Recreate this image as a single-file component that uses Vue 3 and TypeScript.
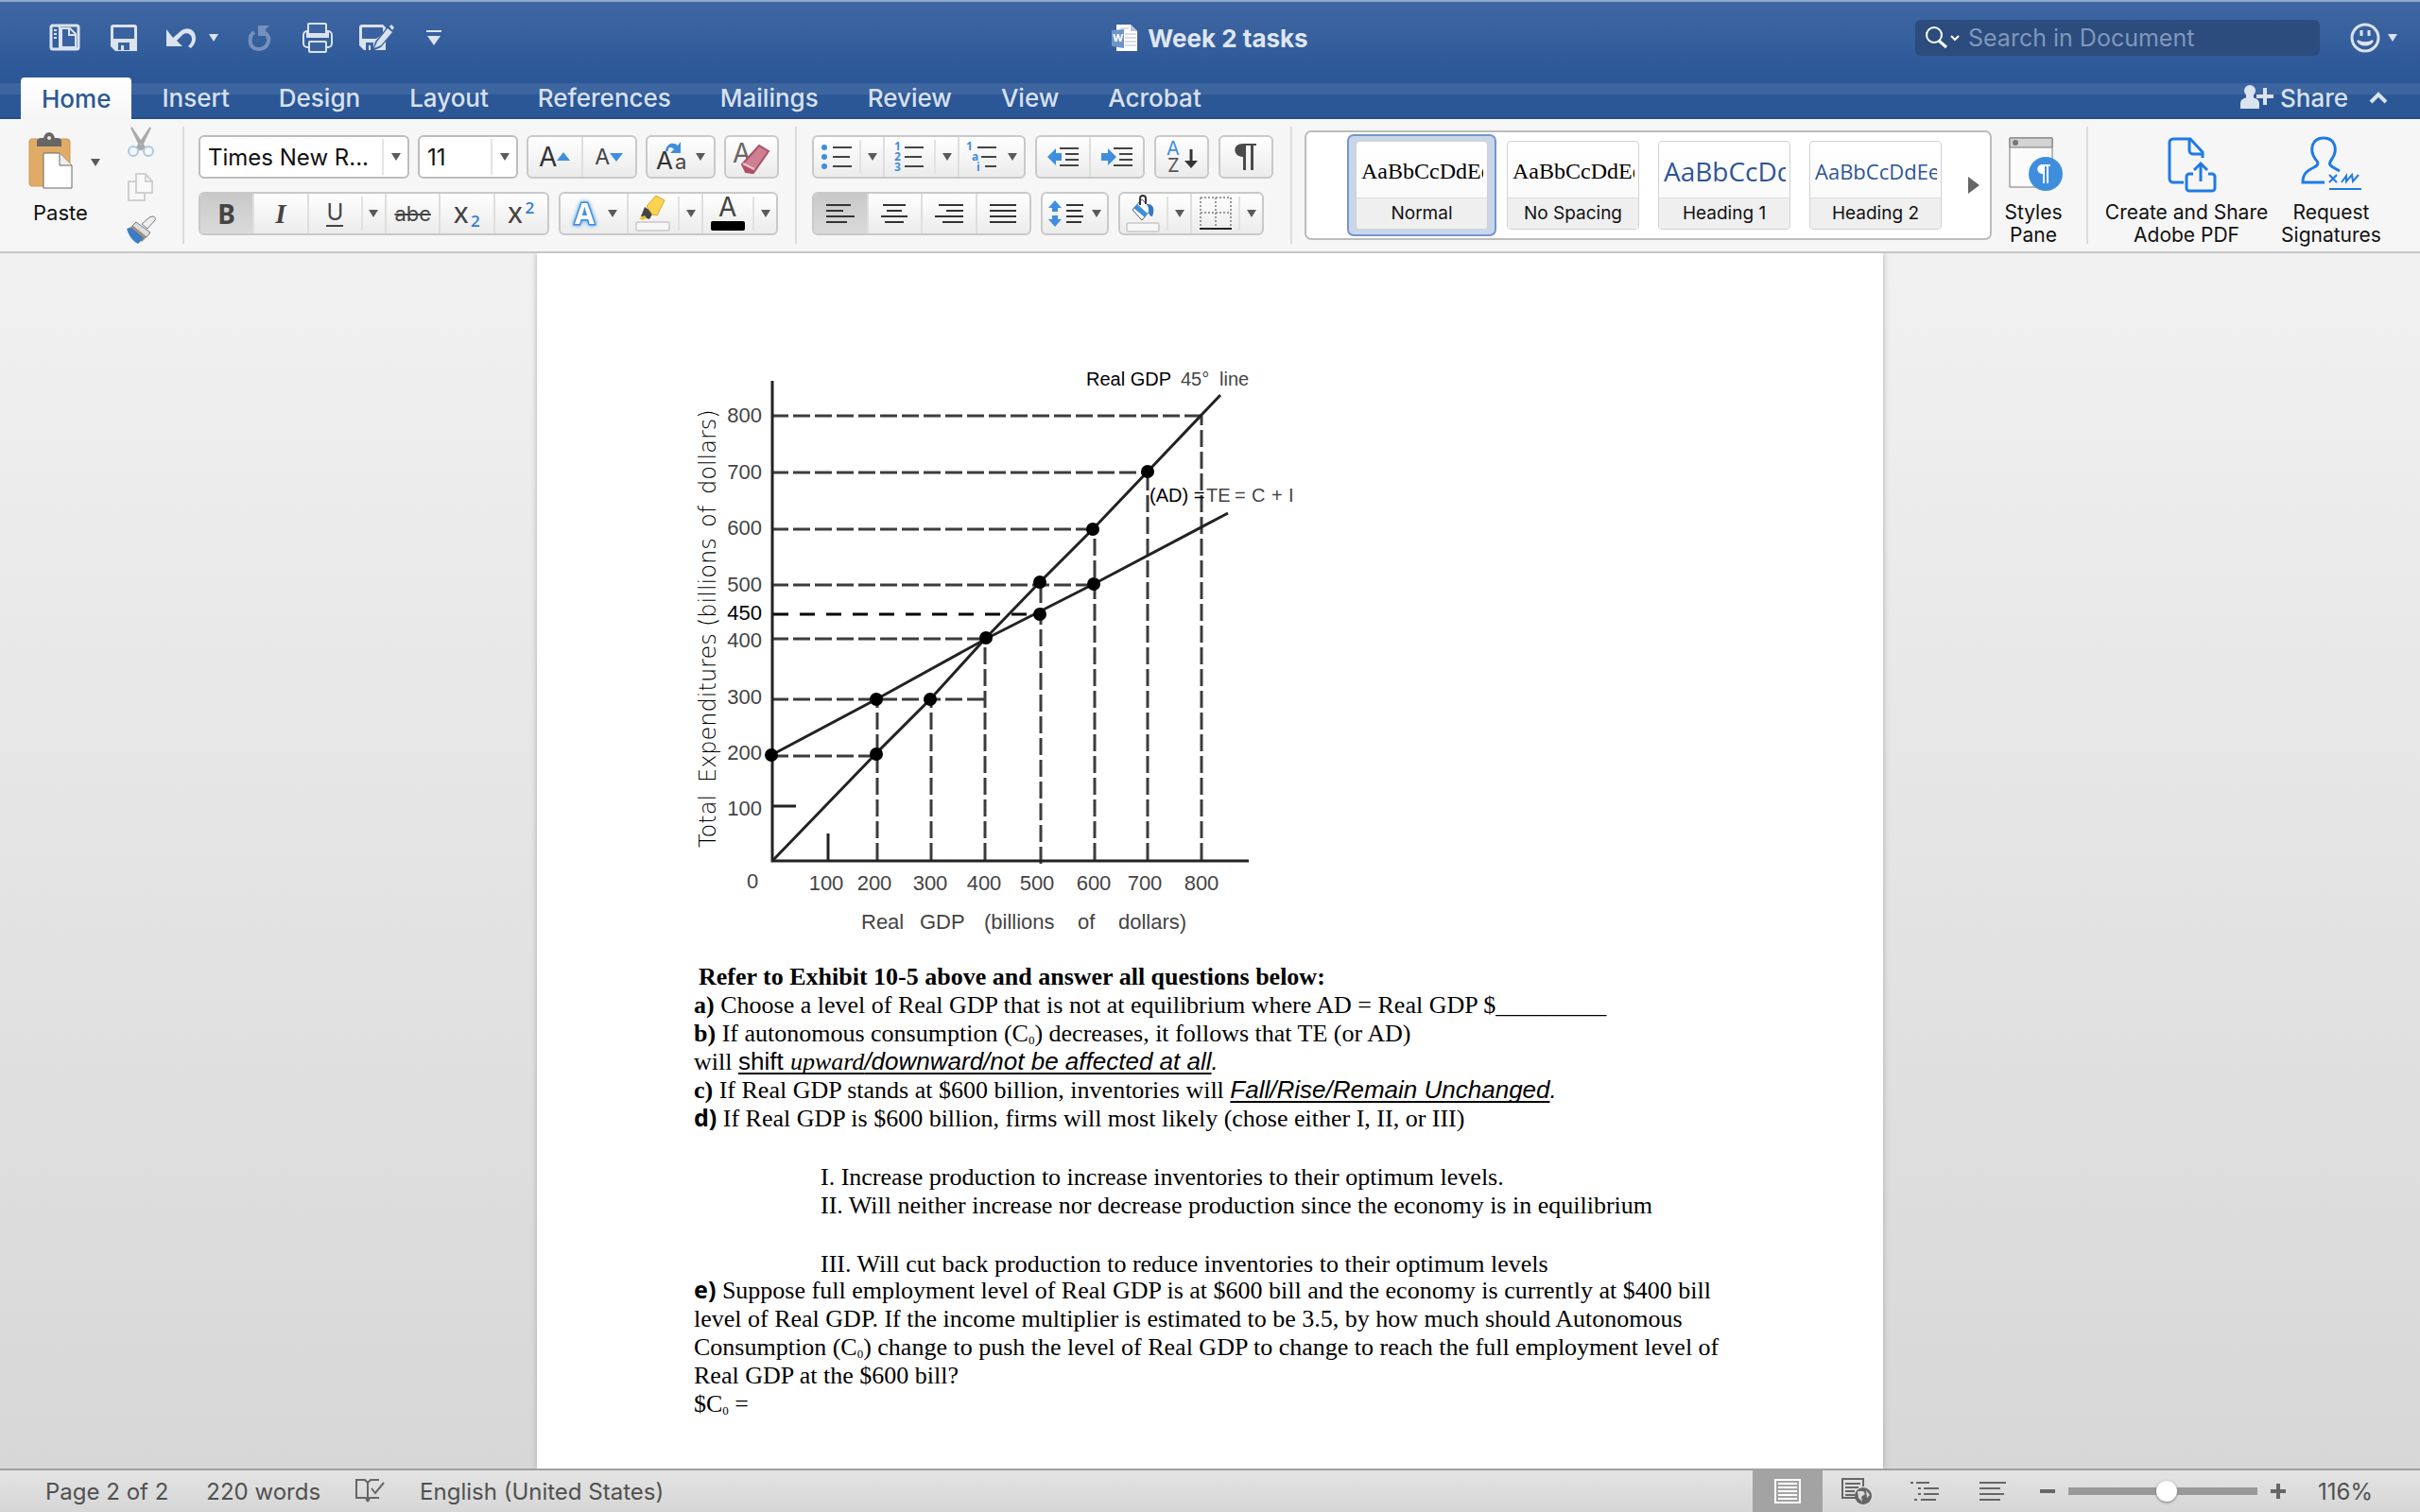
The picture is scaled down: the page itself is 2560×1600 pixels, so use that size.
<script setup lang="ts">
import { ref } from 'vue'

interface StyleCard { label: string; sample: string; kind: string }
interface Mark { x: number; y: number; text: string; strong?: boolean }
interface Segment { x1: number; y1: number; x2: number; y2: number }

const tabs: string[] = ['Home', 'Insert', 'Design', 'Layout', 'References', 'Mailings', 'Review', 'View', 'Acrobat']
const activeTab = ref('Home')
const activeStyle = ref('Normal')
const zoom = ref(52)

const cards: StyleCard[] = [
  { label: 'Normal', sample: 'AaBbCcDdEe', kind: 'serif' },
  { label: 'No Spacing', sample: 'AaBbCcDdEe', kind: 'serif' },
  { label: 'Heading 1', sample: 'AaBbCcDd', kind: 'h1' },
  { label: 'Heading 2', sample: 'AaBbCcDdEe', kind: 'h2' },
]

const yLabels: Mark[] = [
  { x: 806, y: 447, text: '800' },
  { x: 806, y: 507, text: '700' },
  { x: 806, y: 566, text: '600' },
  { x: 806, y: 626, text: '500' },
  { x: 806, y: 656, text: '450', strong: true },
  { x: 806, y: 685, text: '400' },
  { x: 806, y: 745, text: '300' },
  { x: 806, y: 804, text: '200' },
  { x: 806, y: 863, text: '100' },
]
const xLabels: Mark[] = [
  { x: 796, y: 940, text: '0' },
  { x: 874, y: 942, text: '100' },
  { x: 925, y: 942, text: '200' },
  { x: 984, y: 942, text: '300' },
  { x: 1041, y: 942, text: '400' },
  { x: 1097, y: 942, text: '500' },
  { x: 1157, y: 942, text: '600' },
  { x: 1211, y: 942, text: '700' },
  { x: 1271, y: 942, text: '800' },
]
const axisWords: Mark[] = [
  { x: 911, y: 983, text: 'Real' },
  { x: 973, y: 983, text: 'GDP' },
  { x: 1041, y: 983, text: '(billions' },
  { x: 1140, y: 983, text: 'of' },
  { x: 1183, y: 983, text: 'dollars)' },
]
const sideWords: Mark[] = [
  { x: -897, y: 757, text: 'Total' },
  { x: -828, y: 757, text: 'Expenditures' },
  { x: -663, y: 757, text: '(billions' },
  { x: -558, y: 757, text: 'of' },
  { x: -523, y: 757, text: 'dollars)' },
]
const lineWords: Mark[] = [
  { x: 1149, y: 408, text: 'Real GDP', strong: true },
  { x: 1249, y: 408, text: '45°' },
  { x: 1290, y: 408, text: 'line' },
  { x: 1216, y: 531, text: '(AD) =', strong: true },
  { x: 1276, y: 531, text: 'TE' },
  { x: 1306, y: 531, text: '=' },
  { x: 1324, y: 531, text: 'C' },
  { x: 1345, y: 531, text: '+' },
  { x: 1363, y: 531, text: 'I' },
]
const guides: Segment[] = [
  { x1: 816, y1: 440, x2: 1271, y2: 440 },
  { x1: 816, y1: 500, x2: 1214, y2: 500 },
  { x1: 816, y1: 560, x2: 1157, y2: 560 },
  { x1: 816, y1: 619, x2: 1157, y2: 619 },
  { x1: 816, y1: 676, x2: 1042, y2: 676 },
  { x1: 816, y1: 740, x2: 1042, y2: 740 },
  { x1: 816, y1: 800, x2: 927, y2: 800 },
  { x1: 928, y1: 910, x2: 928, y2: 740 },
  { x1: 985, y1: 910, x2: 985, y2: 740 },
  { x1: 1042, y1: 910, x2: 1042, y2: 676 },
  { x1: 1101, y1: 914, x2: 1101, y2: 617 },
  { x1: 1158, y1: 910, x2: 1158, y2: 560 },
  { x1: 1214, y1: 910, x2: 1214, y2: 500 },
  { x1: 1271, y1: 910, x2: 1271, y2: 440 },
]
const points: [number, number][] = [
  [816, 799], [927, 740], [984, 740], [927, 798], [1043, 675], [1100, 616],
  [1100, 650], [1156, 560], [1157, 618], [1214, 499],
]
</script>

<template>
  <div class="app">
    <header class="titlebar">
      <div class="quick">
        <button aria-label="Sidebar"><svg width="34" height="30" viewBox="0 0 34 30"><rect x="2" y="2" width="29" height="25" rx="2" fill="none" stroke="#dbe3ef" stroke-width="3" /><path d="M5 7h3M5 11h3M5 15h3" stroke="#dbe3ef" stroke-width="2" /><path d="M11 2v26M13 5h9l6 6v14H13z" stroke="#dbe3ef" stroke-width="2" fill="#3a629f" /><path d="M21 5v7h7" stroke="#dbe3ef" stroke-width="2" fill="none" /></svg></button>
        <button class="q-save" aria-label="Save"><svg width="30" height="30" viewBox="0 0 30 30"><path d="M1 4a3 3 0 0 1 3-3h22a3 3 0 0 1 3 3v25H6l-5-5z" fill="#dbe3ef" /><rect x="4" y="4" width="22" height="12" fill="#3a629f" /><path d="M9 28v-8h12v8h-6v-5h-3v5z" fill="#3a629f" /></svg></button>
        <button class="q-undo" aria-label="Undo"><svg width="34" height="24" viewBox="0 0 34 24"><path d="M2 3v18h17l-6-6 6-6c4-4 10-1 10 4 0 3-1 5-4 8l3 2c4-4 5-7 5-11C33 3 24-1 17 5l-8 7z" fill="#dbe3ef" /></svg></button>
        <button class="q-drop" aria-label="Undo history"><i class="caret light"></i></button>
        <button class="q-redo" aria-label="Redo"><svg width="26" height="28" viewBox="0 0 26 28"><path d="M8 8c-6 4-7 17 4 18 11 0 14-11 8-17" fill="none" stroke="#7690bc" stroke-width="4" /><path d="M12 1h12l-4 4 1 7-9 0z" fill="#7690bc" /></svg></button>
        <button class="q-print" aria-label="Print"><svg width="34" height="34" viewBox="0 0 34 34"><g fill="none" stroke="#dbe3ef" stroke-width="2"><rect x="7" y="2" width="19" height="10" rx="1" /><rect x="2" y="10" width="30" height="17" rx="4" /></g><path d="M5 10h24v7H5z" fill="#dbe3ef" /><rect x="8" y="3" width="17" height="9" fill="#3c64a1" /><rect x="8" y="21" width="18" height="11" rx="1" fill="#3a629f" stroke="#dbe3ef" stroke-width="2" /></svg></button>
        <button class="q-edit" aria-label="Save as"><svg width="38" height="32" viewBox="0 0 38 32"><path d="M1 5a3 3 0 0 1 3-3h22l3 3v24H6l-5-5z" fill="#dbe3ef" /><path d="M4 5h22v7l-7 5H4zM8 29v-8h8v8h-3v-5h-2v5z" fill="#3a629f" /><path d="M15 30l3-10L31 4l7 5-14 17z" fill="#3a629f" /><path d="M17 27l3-7L31 6l5 4-12 14zM33 4l2-2 3 3-2 3z" fill="#dbe3ef" /></svg></button>
        <button class="q-more" aria-label="Customize toolbar"><svg width="16" height="16" viewBox="0 0 16 16"><path d="M0 0h16v2H0zM1 6h14l-7 10z" fill="#dbe3ef" /></svg></button>
      </div>
      <h1 class="doc-title">
        <svg width="28" height="30" viewBox="0 0 28 30"><path d="M5 1h15l7 7v21H5z" fill="#fff" /><path d="M20 1v7h7z" fill="#b9c2d0" /><path d="M9 5h9M14 11h12M14 15h12M14 19h12M14 23h12" stroke="#b4bcc9" stroke-width="1" /><path d="M0 7l13-1v20l-13-2z" fill="#6f93c8" /><text x="1" y="19" class="w-mark">W</text></svg>
        <span>Week 2 tasks</span>
      </h1>
      <div class="tools">
        <label class="search">
          <svg width="38" height="24" viewBox="0 0 38 24"><circle cx="9" cy="9" r="8" fill="none" stroke="#fff" stroke-width="2" /><path d="M14 15l8 7" stroke="#fff" stroke-width="3" /><path d="M27 10l4 4 4-4" fill="none" stroke="#fff" stroke-width="2" /></svg>
          <input type="text" placeholder="Search in Document" aria-label="Search in Document" />
        </label>
        <button class="smile" aria-label="Feedback"><svg width="34" height="34" viewBox="0 0 34 34"><circle cx="17" cy="17" r="14" fill="none" stroke="#dbe3ef" stroke-width="3" /><path d="M13 9v6M21 9v6" stroke="#dbe3ef" stroke-width="3" /><path d="M9 20c3 6 13 6 16 0-4 3-12 3-16 0z" fill="#dbe3ef" stroke="#dbe3ef" stroke-width="2" /></svg><i class="caret light"></i></button>
      </div>
    </header>

    <nav class="tabs">
      <button v-for="t in tabs" :key="t" :class="['tab', { on: t === activeTab }]" @click="activeTab = t">{{ t }}</button>
      <button class="share">
        <svg width="36" height="26" viewBox="0 0 36 26"><circle cx="10" cy="6" r="6" fill="#dbe3ef" /><path d="M6 8h8v6H6zM0 25v-5c0-5 4-7 10-7s10 2 10 7v5zM24 3h4v7h7v4h-7v7h-4v-7h-7v-4h7z" fill="#dbe3ef" /></svg>
        <span>Share</span>
      </button>
      <button class="fold" aria-label="Collapse ribbon"><svg width="20" height="13" viewBox="0 0 20 13"><path d="M2 11l8-8 8 8" fill="none" stroke="#dbe3ef" stroke-width="4" /></svg></button>
    </nav>

    <section class="ribbon">
      <div class="clipboard">
        <button class="paste">
          <svg width="48" height="60" viewBox="0 0 48 60"><rect x="1" y="7" width="43" height="50" rx="3" fill="#dfab67" stroke="#cf9a52" stroke-width="1" /><path d="M9 10c0-4 4-4 7-4 1-4 3-6 6-6s5 2 6 6c4 0 7 0 7 4v5H9z" fill="#666" /><circle cx="22" cy="6" r="2" fill="#f0e6d8" /><path d="M16 22h17l13 13v24H16z" fill="#fff" stroke="#666" stroke-width="1" /><path d="M33 22v13h13" fill="#eee" stroke="#666" stroke-width="1" /></svg>
          <span>Paste</span>
        </button>
        <button class="paste-drop" aria-label="Paste options"><i class="caret"></i></button>
        <div class="clip-tools">
          <button aria-label="Cut"><svg width="30" height="34" viewBox="0 0 30 34"><path d="M5 1l14 21-3 2zM25 1L11 22l3 2z" fill="#a9a9a9" stroke="#a9a9a9" stroke-width="2" /><circle cx="7" cy="26" r="5" fill="none" stroke="#a9c8e6" stroke-width="2" /><circle cx="23" cy="26" r="5" fill="none" stroke="#a9c8e6" stroke-width="2" /></svg></button>
          <button aria-label="Copy"><svg width="30" height="32" viewBox="0 0 30 32"><path d="M2 10h17v20H2z" fill="#f7f7f7" stroke="#d0d0d0" stroke-width="2" /><path d="M10 2h10l7 8v12H10zM20 2v8h7" fill="#f9f9f9" stroke="#d0d0d0" stroke-width="2" /></svg></button>
          <button aria-label="Format painter"><svg width="34" height="30" viewBox="0 0 34 30"><path d="M29 1c3 0 4 2 3 4l-8 9-6-5 8-7z" fill="#eee" stroke="#777" stroke-width="1" /><path d="M12 7l15 11-4 5L8 11z" fill="#ddd" stroke="#777" stroke-width="1" /><path d="M8 11l15 12-5 5L3 14z" fill="#a68f76" /><path d="M2 14l5-1 13 11-6 6C8 27 4 21 2 14z" fill="#3a7cc9" /></svg></button>
        </div>
      </div>
      <div class="sep"></div>

      <div class="rows font-rows">
        <div class="row">
          <div class="combo family"><select aria-label="Font"><option>Times New R...</option></select><i class="caret"></i></div>
          <div class="combo size"><select aria-label="Font size"><option>11</option></select><i class="caret"></i></div>
          <div class="group grow-shrink">
            <button aria-label="Increase font size"><span class="big-a">A</span><svg width="14" height="10" viewBox="0 0 14 10"><path d="M0 9l7-9 7 9z" fill="#3f8ede" /></svg></button>
            <button aria-label="Decrease font size"><span class="small-a">A</span><svg width="14" height="10" viewBox="0 0 14 10"><path d="M0 1l7 9 7-9z" fill="#3f8ede" /></svg></button>
          </div>
          <div class="group case"><button aria-label="Change case"><svg width="34" height="38" viewBox="0 0 34 38"><text x="0" y="32" class="ic-a">A</text><text x="20" y="32" class="ic-a2">a</text><path d="M10 13c1-9 9-10 13-6l3-4v12H15l4-4c-4-4-7-1-6 2z" fill="#3f8ede" /></svg><i class="caret"></i></button></div>
          <div class="group single"><button aria-label="Clear formatting"><svg width="40" height="42" viewBox="0 0 40 42"><text x="0" y="27" class="ic-clear">A</text><path d="M10 29L28 9l10 6-16 23-8-1z" fill="#cf7f92" stroke="#ab5068" stroke-width="2" /><path d="M10 29l12 6v4l-8-2z" fill="#b04f67" /><path d="M11 28l12 6" stroke="#f0c3cc" stroke-width="2" /></svg></button></div>
        </div>
        <div class="row">
          <div class="group bius">
            <button class="pressed" aria-label="Bold"><b class="bold">B</b></button>
            <button aria-label="Italic"><em class="ital">I</em></button>
            <button aria-label="Underline"><span class="under">U</span></button>
            <button class="drop" aria-label="Underline style"><i class="caret"></i></button>
            <button aria-label="Strikethrough"><s class="strike">abc</s></button>
            <button aria-label="Subscript"><span class="x">X</span><sub class="idx low">2</sub></button>
            <button aria-label="Superscript"><span class="x">X</span><sup class="idx high">2</sup></button>
          </div>
          <div class="group paint">
            <button class="effects" aria-label="Text effects"><svg width="32" height="34" viewBox="0 0 32 34"><text x="5" y="28" class="glow">A</text></svg><i class="caret"></i></button>
            <button aria-label="Highlight"><svg width="38" height="40" viewBox="0 0 38 40"><path d="M6 23l4-10 9 6-4 7z" fill="#444" /><path d="M4 25l6-3 2 3-4 2z" fill="#f4c430" /><path d="M12 12L22 1l9 5-8 16-5-1z" fill="#fbd34f" stroke="#d9a62b" stroke-width="1" /><rect x="1" y="29" width="35" height="9" rx="2" fill="#f7f7f7" stroke="#d2d2d2" stroke-width="2" /></svg></button>
            <button class="drop" aria-label="Highlight color"><i class="caret"></i></button>
            <button aria-label="Font color"><svg width="38" height="40" viewBox="0 0 38 40"><text x="9" y="23" class="ic-color">A</text><rect x="1" y="28" width="36" height="10" rx="2" fill="#000" /></svg></button>
            <button class="drop" aria-label="Font color menu"><i class="caret"></i></button>
          </div>
        </div>
      </div>
      <div class="sep"></div>

      <div class="rows para-rows">
        <div class="row">
          <div class="group lists">
            <button aria-label="Bullets"><svg width="34" height="30" viewBox="0 0 34 30"><g fill="#3f8ede"><circle cx="4" cy="5" r="3" /><circle cx="4" cy="15" r="3" /><circle cx="4" cy="25" r="3" /></g><path d="M13 5h20M13 15h18M13 25h20" stroke="#444" stroke-width="2" /></svg></button>
            <button class="drop" aria-label="Bullet menu"><i class="caret"></i></button>
            <button aria-label="Numbering"><svg width="34" height="32" viewBox="0 0 34 32"><g class="tiny"><text x="1" y="9">1</text><text x="1" y="20">2</text><text x="1" y="31">3</text></g><path d="M12 6h20M12 16h18M12 26h20" stroke="#444" stroke-width="2" /></svg></button>
            <button class="drop" aria-label="Numbering menu"><i class="caret"></i></button>
            <button aria-label="Multilevel list"><svg width="34" height="32" viewBox="0 0 34 32"><g class="tiny"><text x="0" y="9">1</text><text x="6" y="20">a</text><text x="11" y="31">i</text></g><path d="M12 6h20M16 16h16M20 26h12" stroke="#444" stroke-width="2" /></svg><i class="caret"></i></button>
          </div>
          <div class="group indent">
            <button aria-label="Decrease indent"><svg width="36" height="26" viewBox="0 0 36 26"><path d="M1 13l9-9v5h6v8h-6v5z" fill="#3f8ede" /><path d="M14 4h20M20 10h14M20 16h14M14 22h20" stroke="#444" stroke-width="2" /></svg></button>
            <button aria-label="Increase indent"><svg width="36" height="26" viewBox="0 0 36 26"><path d="M17 13l-9-9v5H1v8h7v5z" fill="#3f8ede" /><path d="M14 4h20M20 10h14M20 16h14M14 22h20" stroke="#444" stroke-width="2" /></svg></button>
          </div>
          <div class="group single"><button aria-label="Sort"><svg width="34" height="38" viewBox="0 0 34 38"><text x="1" y="17" class="sort-a">A</text><text x="2" y="35" class="sort-z">Z</text><path d="M27 11v16" stroke="#333" stroke-width="3" /><path d="M20 23h14l-7 8z" fill="#333" /></svg></button></div>
          <div class="group single"><button aria-label="Show marks"><svg width="26" height="32" viewBox="0 0 26 32"><path d="M24 2H10C-2 2-1 16 10 16v14h3V4h5v26h3V4h3z" fill="#4a4a4a" /></svg></button></div>
        </div>
        <div class="row">
          <div class="group align">
            <button class="pressed" aria-label="Align left"><svg width="32" height="24" viewBox="0 0 32 24"><path d="M1 3h26M1 9h18M1 15h30M1 21h22" stroke="#333" stroke-width="2" /></svg></button>
            <button aria-label="Center"><svg width="32" height="24" viewBox="0 0 32 24"><path d="M4 3h24M8 9h16M2 15h28M6 21h20" stroke="#333" stroke-width="2" /></svg></button>
            <button aria-label="Align right"><svg width="32" height="24" viewBox="0 0 32 24"><path d="M5 3h26M13 9h18M1 15h30M9 21h22" stroke="#333" stroke-width="2" /></svg></button>
            <button aria-label="Justify"><svg width="32" height="24" viewBox="0 0 32 24"><path d="M2 3h28M2 9h28M2 15h28M2 21h28" stroke="#333" stroke-width="2" /></svg></button>
          </div>
          <div class="group case"><button aria-label="Line spacing"><svg width="38" height="46" viewBox="0 0 38 46"><path d="M7 9l7 8h-4v4H4v-4H0zM7 37l7-8h-4v-4H4v4H0z" fill="#3f8ede" /><path d="M19 14h18M19 20h16M19 26h18M19 32h16" stroke="#333" stroke-width="2" /></svg><i class="caret"></i></button></div>
          <div class="group fill">
            <button aria-label="Shading"><svg width="38" height="42" viewBox="0 0 38 42"><path d="M7 17L17 6l10 10-10 12z" fill="#fff" stroke="#555" stroke-width="1" /><path d="M12 11l11 10-3 4-12-10z" fill="#3f8ede" /><path d="M22 11c7-1 9 5 6 13-4 0-4-5-4-9z" fill="#3277c4" /><path d="M15 12V5c0-4 6-4 6 0v6" fill="none" stroke="#333" stroke-width="2" /><rect x="1" y="31" width="34" height="9" rx="2" fill="#f7f7f7" stroke="#d2d2d2" stroke-width="2" /></svg></button>
            <button class="drop" aria-label="Shading color"><i class="caret"></i></button>
            <button aria-label="Borders"><svg width="36" height="36" viewBox="0 0 36 36"><path d="M2 1h32M2 17h32M2 1v32M18 1v32M34 1v32" fill="none" stroke="#999" stroke-width="2" stroke-dasharray="2 2" /><path d="M1 34h34" stroke="#222" stroke-width="2" /></svg></button>
            <button class="drop" aria-label="Border menu"><i class="caret"></i></button>
          </div>
        </div>
      </div>
      <div class="sep"></div>

      <div class="gallery">
        <button v-for="c in cards" :key="c.label" :class="['card', { chosen: c.label === activeStyle }]" @click="activeStyle = c.label">
          <span class="card-face">
            <span :class="['sample', c.kind]">{{ c.sample }}</span>
            <span class="card-label">{{ c.label }}</span>
          </span>
        </button>
        <button class="more" aria-label="More styles"><svg width="12" height="18" viewBox="0 0 12 18"><path d="M0 0l12 9-12 9z" fill="#666" /></svg></button>
      </div>

      <button class="action pane">
        <svg width="66" height="60" viewBox="-6 0 66 60"><path d="M2 2h45v52H2z" fill="#fbfbfb" stroke="#777" stroke-width="1" /><path d="M2 2h45v10H2z" fill="#d3d3d3" stroke="#777" stroke-width="1" /><circle cx="8" cy="7" r="3" fill="#777" /><circle cx="40" cy="40" r="18" fill="#3f8ede" /><path d="M45 30h-8c-8 0-7 10 0 10v10h2V32h2v18h2V32h2z" fill="#fff" /></svg>
        <span>Styles<br />Pane</span>
      </button>
      <div class="sep"></div>
      <button class="action create">
        <svg width="66" height="60" viewBox="-12 0 66 60"><g fill="none" stroke="#1f7ae6" stroke-width="3"><path d="M18 49H7a4 4 0 0 1-4-4V7a4 4 0 0 1 4-4h18l13 14v6" /><path d="M24 3v12a4 4 0 0 0 4 4h10" /><path d="M28 40h-4a3 3 0 0 0-3 3v12a3 3 0 0 0 3 3h24a3 3 0 0 0 3-3V43a3 3 0 0 0-3-3h-4M36 48V29M29 36l7-7 7 7" /></g></svg>
        <span>Create and Share<br />Adobe PDF</span>
      </button>
      <button class="action request">
        <svg width="66" height="60" viewBox="0 0 66 60"><g fill="none" stroke="#1f7ae6" stroke-width="3"><path d="M26 49H3c0-9 4-12 12-16 6-3 4-6 1-9-6-9-4-22 9-22s15 13 9 22c-3 4-4 6 1 9l7 4" /><path d="M31 41l8 8M39 41l-8 8M44 49l5-7 0 6 6-7 1 7 6-7M31 56h34" stroke-width="2" /></g></svg>
        <span>Request<br />Signatures</span>
      </button>
    </section>

    <main class="desk">
      <article class="page">
        <svg class="chart" width="660" height="630" viewBox="734 380 660 630" role="img" aria-label="Total expenditures against real GDP">
          <g stroke="#3c3c3c" stroke-width="3" stroke-dasharray="18 5">
            <line v-for="(g, i) in guides" :key="i" :x1="g.x1" :y1="g.y1" :x2="g.x2" :y2="g.y2" />
          </g>
          <path d="M818 650H1100" stroke="#000" stroke-width="3" stroke-dasharray="16 12" />
          <g fill="none" stroke="#222" stroke-width="3">
            <path d="M817 403V911H1321" />
            <path d="M817 853H842M876 911V882" />
            <path d="M818 910L927 797 984 740 1043 675 1100 616 1156 560 1214 499 1291 418" />
            <path d="M816 799L927 740 1043 676 1157 618 1299 543" />
          </g>
          <circle v-for="(p, i) in points" :key="i" :cx="p[0]" :cy="p[1]" r="7" fill="#000" />
          <text v-for="m in yLabels" :key="m.text" :x="m.x" :y="m.y" :class="['tick end', { strong: m.strong }]">{{ m.text }}</text>
          <text v-for="m in xLabels" :key="m.text" :x="m.x" :y="m.y" class="tick mid">{{ m.text }}</text>
          <text v-for="m in axisWords" :key="m.text" :x="m.x" :y="m.y" class="tick">{{ m.text }}</text>
          <text v-for="(m, i) in lineWords" :key="i" :x="m.x" :y="m.y" :class="['note', { strong: m.strong }]">{{ m.text }}</text>
          <g transform="rotate(-90)">
            <text v-for="m in sideWords" :key="m.text" :x="m.x" :y="m.y" class="side">{{ m.text }}</text>
          </g>
        </svg>

        <div class="prose">
          <p class="lead"><b>Refer to Exhibit 10-5 above and answer all questions below:</b></p>
          <p><b>a)</b> Choose a level of Real GDP that is not at equilibrium where AD = Real GDP $_________</p>
          <p><b>b)</b> If autonomous consumption (C<sub>0</sub>) decreases, it follows that TE (or AD)<br />will <u><span class="arial">shift </span><i>upward</i><i class="arial">/downward/not be affected at all</i></u><i class="arial">.</i></p>
          <p><b>c)</b> If Real GDP stands at $600 billion, inventories will <u><i class="arial">Fall/Rise/Remain Unchanged</i></u><i class="arial">.</i></p>
          <p><b class="humanist">d)</b> If Real GDP is $600 billion, firms will most likely (chose either I, II, or III)</p>
          <p class="option gap">I. Increase production to increase inventories to their optimum levels.</p>
          <p class="option">II. Will neither increase nor decrease production since the economy is in equilibrium</p>
          <p class="option gap">III. Will cut back production to reduce inventories to their optimum levels</p>
          <p><b class="humanist">e)</b> Suppose full employment level of Real GDP is at $600 bill and the economy is currently at $400 bill<br />level of Real GDP. If the income multiplier is estimated to be 3.5, by how much should Autonomous<br />Consumption (C<sub>0</sub>) change to push the level of Real GDP to change to reach the full employment level of<br />Real GDP at the $600 bill?</p>
          <p>$C<sub>0</sub> =</p>
        </div>
      </article>
    </main>

    <footer class="status">
      <span>Page 2 of 2</span>
      <span class="words">220 words</span>
      <button class="proof" aria-label="Proofing"><svg width="32" height="28" viewBox="0 0 32 28"><g fill="none" stroke="#666" stroke-width="2"><path d="M14 25l-2-4H2V2h9l3 3 3-3h9M14 5v20l2-4h10" /><path d="M18 11l4 5 9-11" /></g></svg></button>
      <span class="lang">English (United States)</span>
      <div class="views">
        <button class="view on" aria-label="Print layout"><svg width="30" height="28" viewBox="0 0 30 28"><path d="M2 2h26v24H2z" fill="none" stroke="#fff" stroke-width="2" /><path d="M5 6h20M5 10h20M5 14h20M5 18h20M5 22h20" stroke="#fff" stroke-width="2" /></svg></button>
        <button class="view" aria-label="Web layout"><svg width="34" height="30" viewBox="0 0 34 30"><path d="M16 22H2V2h22v8" fill="none" stroke="#666" stroke-width="2" /><path d="M5 7h16M5 11h14M5 15h10M5 19h10" stroke="#666" stroke-width="2" /><circle cx="24" cy="20" r="9" fill="#666" /><path d="M18 15l6 0 2 3-4 3 1 5-4-4zM27 14l4 5-3 3z" fill="#ddd" /></svg></button>
        <button class="view" aria-label="Outline"><svg width="32" height="24" viewBox="0 0 32 24"><path d="M1 3h3M7 3h14M9 9h3M15 9h16M9 15h3M15 15h16M5 21h3M12 21h16" stroke="#666" stroke-width="2" /></svg></button>
        <button class="view" aria-label="Draft"><svg width="32" height="24" viewBox="0 0 32 24"><path d="M2 3h28M2 9h22M2 15h26M2 21h22" stroke="#666" stroke-width="2" /></svg></button>
      </div>
      <button class="step" aria-label="Zoom out"><svg width="16" height="16" viewBox="0 0 16 16"><path d="M0 8h16" stroke="#666" stroke-width="4" /></svg></button>
      <input v-model="zoom" class="zoom" type="range" min="0" max="100" aria-label="Zoom" />
      <button class="step" aria-label="Zoom in"><svg width="16" height="16" viewBox="0 0 16 16"><path d="M0 8h16M8 0v16" stroke="#666" stroke-width="4" /></svg></button>
      <span class="percent">116%</span>
    </footer>
  </div>
</template>

<style>
body { margin: 0; }
</style>

<style scoped>
.app { display: flex; flex-direction: column; height: 100vh; overflow: hidden; font-family: Inter, "Liberation Sans", sans-serif; color: #111; }
.app * { box-sizing: border-box; }
button { display: flex; align-items: center; justify-content: center; padding: 0; border: 0; background: none; font: inherit; color: inherit; }
svg { display: block; flex: none; }
.caret { width: 0; height: 0; border: 5px solid transparent; border-top: 8px solid #5a5a5a; border-bottom: 0; flex: none; }
.caret.light { border-top-color: #dbe3ef; }

.titlebar { display: grid; grid-template-columns: 1fr auto 1fr; align-items: center; height: 82px; padding-bottom: 4px; border-top: 2px solid #8fa9d0; background: linear-gradient(#4067a3, #2b5797); flex: none; }
.titlebar > * { height: 76px; }
.quick { display: flex; align-items: center; padding-left: 52px; }
.q-save { margin-left: 30px; }
.q-undo { margin-left: 28px; }
.q-drop { margin-left: 13px; }
.q-redo { margin-left: 30px; }
.q-print { margin-left: 32px; }
.q-edit { margin-left: 26px; }
.q-more { margin-left: 34px; }
.doc-title { display: flex; align-items: center; gap: 10px; margin: 0; font-size: 26px; font-weight: 700; color: #dfe6f1; }
.w-mark { font: 700 11px Inter, sans-serif; fill: #fff; }
.tools { display: flex; align-items: center; justify-content: flex-end; padding-right: 24px; }
.search { display: flex; align-items: center; gap: 7px; width: 428px; height: 38px; padding-left: 11px; border-radius: 6px; background: #2b4c7d; }
.search input { flex: 1; min-width: 0; padding: 0; border: 0; outline: 0; background: none; font: 25px Inter, "Liberation Sans", sans-serif; color: #fff; }
.search input::placeholder { color: #8197bb; opacity: 1; }
.smile { gap: 7px; margin-left: 31px; }

.tabs { display: flex; align-items: stretch; height: 44px; padding-left: 22px; border-bottom: 2px solid #264d86; background: linear-gradient(#2b5797 6px, #3d65a0 6px, #3d65a0 18px, #2b5797 18px); flex: none; }
.tab { padding: 0 26px; font-size: 26px; font-weight: 500; color: #d9e1ee; }
.tab.on { height: 44px; padding: 0 22px; margin-right: 6px; border-radius: 4px 4px 0 0; background: linear-gradient(#fff, #f6f6f6); color: #2b5797; }
.share { gap: 6px; margin-left: auto; font-size: 26px; font-weight: 500; color: #d9e1ee; }
.fold { margin: 0 34px 0 22px; }

.ribbon { display: flex; align-items: flex-start; height: 142px; border-bottom: 2px solid #c6c6c6; background: #f6f6f6; flex: none; }
.sep { width: 2px; height: 124px; margin-top: 8px; background: #dcdcdc; flex: none; }
.clipboard { display: flex; width: 193px; padding: 0 0 0 30px; flex: none; }
.paste { flex-direction: column; align-items: flex-start; align-self: flex-start; margin-top: 14px; gap: 12px; width: 66px; font-size: 22px; line-height: 26px; }
.paste span { padding-left: 5px; }
.paste-drop { height: 16px; margin-top: 38px; }
.clip-tools { display: flex; flex-direction: column; gap: 14px; margin: 8px 0 0 26px; }
.rows { display: flex; flex-direction: column; gap: 14px; padding-top: 17px; flex: none; }
.font-rows { margin: 0 17px 0 15px; }
.para-rows { margin: 0 18px 0 16px; }
.row { display: flex; gap: 10px; height: 46px; }
.font-rows .row:first-child { gap: 9px; }
.combo { display: flex; align-items: center; padding-right: 7px; border: 2px solid #bdbdbd; border-radius: 6px; background: #fff; }
.combo select { appearance: none; flex: 1; height: 38px; min-width: 0; margin-right: 8px; padding: 0 0 0 8px; border: 0; border-right: 2px solid #e4e4e4; background: none; font: 24px Inter, "Liberation Sans", sans-serif; color: #111; }
.family { width: 223px; }
.size { width: 106px; }
.group { display: flex; border: 2px solid #c9c9c9; border-radius: 6px; background: linear-gradient(#fff, #ebebeb); }
.group button { flex: 1; }
.group button + button { border-left: 2px solid #dedede; }
.group .drop { flex: 0 0 25px; height: 36px; margin: 3px 0; border-left: 2px solid #e2e2e2; }
.group .pressed { border-radius: 4px 0 0 4px; background: linear-gradient(#c9c9c9, #dadada); }
.grow-shrink { width: 117px; }
.case { width: 74px; }
.case button { gap: 8px; }
.single { width: 58px; }
.bius { width: 371px; }
.bius button, .paint button { color: #444; }
.paint { width: 232px; }
.paint .effects { flex: 0 0 70px; gap: 8px; }
.lists { width: 226px; }
.lists button:first-child { flex: 0 0 48px; }
.lists button:last-child { flex: 0 0 70px; gap: 10px; }
.indent { width: 116px; }
.align { width: 232px; }
.para-rows .case { width: 72px; }
.fill { width: 154px; }
.big-a { font-size: 28px; line-height: 30px; color: #333; }
.small-a { font-size: 23px; line-height: 30px; color: #444; }
.bold { font: 700 28px "Noto Sans", sans-serif; line-height: 30px; }
.ital { font: italic 700 29px "Liberation Serif", serif; line-height: 30px; }
.under { padding-bottom: 1px; border-bottom: 2px solid #444; font-size: 24px; line-height: 24px; }
.strike { font-size: 22px; }
.x { font: 600 24px "Open Sans", sans-serif; }
.idx { font: 600 17px "Open Sans", sans-serif; color: #2f7fd3; }
.low { padding: 14px 0 0 3px; }
.high { padding: 0 0 14px 3px; }
.ic-a { font: 26px Inter, sans-serif; fill: #333; }
.ic-a2 { font: 22px Inter, sans-serif; fill: #444; }
.ic-clear { font: 28px Inter, sans-serif; fill: #666; }
.ic-color { font: 28px Inter, sans-serif; fill: #444; }
.glow { font: 700 30px "Noto Sans", sans-serif; fill: #fff; stroke: #3f8ede; stroke-width: 3px; paint-order: stroke; filter: drop-shadow(0 0 2px #3f8ede); }
.tiny { font: 700 12px "Noto Sans", sans-serif; fill: #3f8ede; }
.sort-a { font: 20px Inter, sans-serif; fill: #3f8ede; }
.sort-z { font: 20px Inter, sans-serif; fill: #555; }

.gallery { display: flex; align-items: center; flex: 1; gap: 2px; height: 116px; margin: 12px 0 0 13px; padding-left: 43px; border: 2px solid #bcbcbc; border-radius: 7px; background: #fff; overflow: hidden; }
.card { width: 158px; height: 108px; border: 2px solid transparent; border-radius: 7px; flex: none; }
.card.chosen { border-color: #7596c9; background: #c9d6e9; }
.card-face { display: flex; flex-direction: column; width: 140px; height: 94px; border: 1px solid #d2d2d2; border-radius: 4px; background: linear-gradient(#fff, #f8f8f8); overflow: hidden; }
.sample { height: 61px; margin: 0 4px 0 5px; line-height: 62px; text-align: left; white-space: nowrap; overflow: hidden; }
.serif { font-family: "Liberation Serif", serif; font-size: 24px; color: #000; }
.h1 { font-family: "Open Sans", sans-serif; font-size: 28px; color: #2f5597; }
.h2 { font-family: "Open Sans", sans-serif; font-size: 22px; color: #2f5597; }
.card-label { flex: 1; border-top: 1px solid #dedede; background: #efefef; font-size: 19px; line-height: 32px; }
.more { margin-left: 17px; }
.action { flex-direction: column; gap: 9px; margin-top: 18px; font-size: 21px; line-height: 24px; flex: none; white-space: nowrap; }
.pane { width: 88px; margin-right: 12px; }
.create { width: 176px; margin-left: 16px; }
.request { width: 114px; margin: 18px 37px 0 8px; }

.desk { display: flex; justify-content: center; flex: 1; min-height: 0; background: linear-gradient(#f1f1f1, #d7d7d7); overflow: hidden; }
.page { width: 1424px; padding: 112px 0 0 166px; background: #fff; box-shadow: 0 0 6px #aaa; }
.tick { font: 22px "Liberation Sans", sans-serif; fill: #444; }
.end { text-anchor: end; }
.mid { text-anchor: middle; }
.note { font: 20px "Liberation Sans", sans-serif; fill: #444; }
.side { font: 200 24px "DejaVu Sans", sans-serif; fill: #000; }
.strong { fill: #000; }
.prose { padding-top: 9px; font-family: "Liberation Serif", serif; font-size: 26px; line-height: 30px; color: #000; white-space: nowrap; }
.prose p { margin: 0; }
.prose .lead { padding-left: 5px; }
.prose .option { padding-left: 134px; }
.prose .gap { margin-top: 32px; }
.prose .gap + p:not(.option) { margin-top: -2px; }
.prose sub { font-size: 13px; line-height: 0; vertical-align: -3px; }
.prose u { text-decoration-thickness: 2px; text-underline-offset: 3px; text-decoration-skip-ink: none; }
.arial { font-family: "Liberation Sans", sans-serif; font-size: 26px; line-height: 20px; }
.humanist { font-family: "Noto Sans", sans-serif; font-size: 25px; line-height: 20px; }

.status { display: flex; align-items: center; height: 46px; padding-left: 48px; border-top: 2px solid #a0a0a0; background: linear-gradient(#e3e3e3, #d6d6d6); font-size: 24px; color: #505050; white-space: nowrap; flex: none; }
.words { margin-left: 40px; }
.proof { margin-left: 36px; }
.lang { margin-left: 37px; }
.views { display: flex; align-self: stretch; margin-left: auto; }
.view { width: 72px; }
.view.on { width: 74px; background: #a3a3a3; }
.step { margin-left: 14px; }
.zoom { appearance: none; width: 200px; height: 22px; margin: 0 0 0 14px; border-radius: 4px; background: linear-gradient(transparent 7px, #999 7px, #999 15px, transparent 15px); }
.zoom::-webkit-slider-thumb { appearance: none; width: 22px; height: 22px; border-radius: 50%; background: #fff; box-shadow: 0 1px 3px #777; }
.percent { width: 108px; padding-left: 34px; margin-right: 34px; }
</style>
